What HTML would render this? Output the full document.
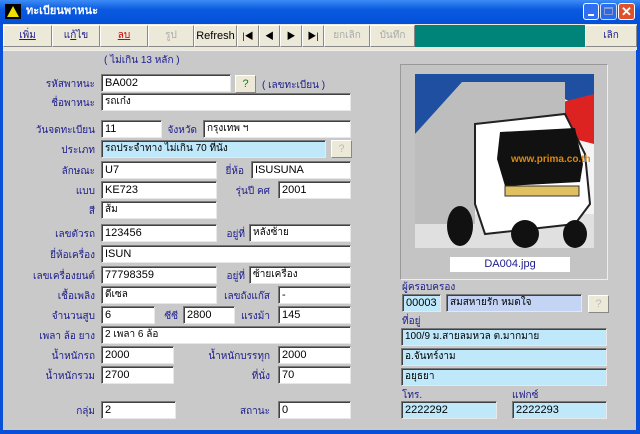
<!DOCTYPE html>
<html><head><meta charset="utf-8">
<style>
*{margin:0;padding:0;box-sizing:border-box}
body{width:640px;height:434px;overflow:hidden;background:#0a4fd8;font-family:"Liberation Sans","Noto Sans CJK SC",sans-serif;font-size:11px;position:relative}
.a{position:absolute}
#title{left:0;top:0;width:640px;height:24px;background:linear-gradient(#3d8cf5,#0a5ae0 40%,#0450d8);}
#tool{left:3px;top:24px;width:634px;height:26px;background:#ece9d8}
.btn{position:absolute;top:25px;height:22px;background:#ece9d8;border:1px solid #fff;border-right-color:#888;border-bottom-color:#888;text-align:center;line-height:20px;font-size:10px;color:#000}
#form{left:3px;top:50px;width:633px;height:380px;background:#c9c9c9;border-top:1px solid #eee}
.l{position:absolute;color:#1c1c8c;font-size:10px;line-height:12px;text-align:right;white-space:nowrap;margin-top:3px}
.i{position:absolute;height:18px;background:#fff;border:1px solid #7a7a7a;border-right-color:#e8e8e8;border-bottom-color:#e8e8e8;box-shadow:inset 1px 1px 0 #404040;padding-left:3px;line-height:16px;font-size:11px;color:#000;white-space:nowrap;overflow:hidden}
.i.t{font-size:10px}
.b{background:#bfe8fa}
.q{position:absolute;width:21px;height:18px;background:#ece9d8;border:1px solid #fff;border-right-color:#888;border-bottom-color:#888;text-align:center;line-height:16px;color:#1a7a1a;font-size:11px}
</style></head><body>
<div class="a" id="title"></div>
<div class="a" style="left:5px;top:4px;width:16px;height:15px;background:#000"></div>
<div class="a" style="left:7px;top:6px;width:0;height:0;border-left:6px solid transparent;border-right:6px solid transparent;border-bottom:11px solid #f0e000"></div>
<div class="a" style="left:26px;top:4px;color:#fff;font-weight:bold;font-size:11px;line-height:14px">ทะเบียนพาหนะ</div>
<div class="a" style="left:583px;top:3px;width:16px;height:17px;background:#2f6ff0;border:1px solid #fff;border-radius:3px"><div class="a" style="left:4px;top:10px;width:6px;height:2px;background:#fff"></div></div>
<div class="a" style="left:600px;top:3px;width:17px;height:17px;background:#2f6ff0;border:1px solid #fff;border-radius:3px;opacity:.8"><div class="a" style="left:3px;top:3px;width:9px;height:8px;border:1px solid #aac;border-top-width:2px"></div></div>
<div class="a" style="left:618px;top:3px;width:17px;height:17px;background:#e0502a;border:1px solid #fff;border-radius:3px;color:#fff;font-weight:bold;text-align:center;line-height:15px;font-size:13px">✕</div>
<div class="a" id="tool"></div>
<div class="btn" style="left:3px;width:49px;color:#1c1c8c"><u>เพิ่ม</u></div>
<div class="btn" style="left:52px;width:48px;color:#1c1c8c">แ<u>ก้</u>ไข</div>
<div class="btn" style="left:100px;width:48px;color:#c00"><u>ลบ</u></div>
<div class="btn" style="left:148px;width:46px;color:#aaa">รูป</div>
<div class="btn" style="left:194px;width:43px;font-size:11px">Refresh</div>
<div class="btn" style="left:237px;width:22px;font-size:9px">|◀</div>
<div class="btn" style="left:259px;width:21px;font-size:9px">◀</div>
<div class="btn" style="left:280px;width:22px;font-size:9px">▶</div>
<div class="btn" style="left:302px;width:22px;font-size:9px">▶|</div>
<div class="btn" style="left:324px;width:46px;color:#aaa">ยกเลิก</div>
<div class="btn" style="left:370px;width:45px;color:#aaa">บันทึก</div>
<div class="a" style="left:415px;top:25px;width:170px;height:22px;background:#00847a"></div>
<div class="btn" style="left:585px;width:52px;color:#1c1c8c">เลิก</div>
<div class="a" id="form"></div>

<div class="l" style="left:104px;top:52px">( ไม่เกิน 13 หลัก )</div>
<div class="l" style="right:545px;top:76px">รหัสพาหนะ</div><div class="i" style="left:101px;top:74px;width:130px">BA002</div>
<div class="q" style="left:235px;top:75px">?</div><div class="l" style="left:262px;top:77px">( เลขทะเบียน )</div>
<div class="l" style="right:545px;top:95px">ชื่อพาหนะ</div><div class="i t" style="left:101px;top:93px;width:250px">รถเก๋ง</div>
<div class="l" style="right:545px;top:122px">วันจดทะเบียน</div><div class="i" style="left:101px;top:120px;width:61px">11</div>
<div class="l" style="right:443px;top:122px">จังหวัด</div><div class="i t" style="left:203px;top:120px;width:148px">กรุงเทพ ฯ</div>
<div class="l" style="right:545px;top:142px">ประเภท</div><div class="i b t" style="left:101px;top:140px;width:225px">รถประจำทาง ไม่เกิน 70 ที่นั่ง</div>
<div class="q" style="left:331px;top:140px;color:#bbb">?</div>
<div class="l" style="right:545px;top:163px">ลักษณะ</div><div class="i" style="left:101px;top:161px;width:116px">U7</div>
<div class="l" style="right:396px;top:163px">ยี่ห้อ</div><div class="i" style="left:251px;top:161px;width:100px">ISUSUNA</div>
<div class="l" style="right:545px;top:183px">แบบ</div><div class="i" style="left:101px;top:181px;width:116px">KE723</div>
<div class="l" style="right:370px;top:183px">รุ่นปี คศ</div><div class="i" style="left:278px;top:181px;width:73px">2001</div>
<div class="l" style="right:545px;top:203px">สี</div><div class="i t" style="left:101px;top:201px;width:116px">ส้ม</div>
<div class="l" style="right:545px;top:226px">เลขตัวรถ</div><div class="i" style="left:101px;top:224px;width:116px">123456</div>
<div class="l" style="right:395px;top:226px">อยู่ที่</div><div class="i t" style="left:249px;top:224px;width:102px">หลังซ้าย</div>
<div class="l" style="right:545px;top:247px">ยี่ห้อเครื่อง</div><div class="i" style="left:101px;top:245px;width:250px">ISUN</div>
<div class="l" style="right:545px;top:268px">เลขเครื่องยนต์</div><div class="i" style="left:101px;top:266px;width:116px">77798359</div>
<div class="l" style="right:395px;top:268px">อยู่ที่</div><div class="i t" style="left:249px;top:266px;width:102px">ซ้ายเครื่อง</div>
<div class="l" style="right:545px;top:288px">เชื้อเพลิง</div><div class="i t" style="left:101px;top:286px;width:116px">ดีเซล</div>
<div class="l" style="right:370px;top:288px">เลขถังแก๊ส</div><div class="i" style="left:278px;top:286px;width:73px">-</div>
<div class="l" style="right:545px;top:308px">จำนวนสูบ</div><div class="i" style="left:101px;top:306px;width:54px">6</div>
<div class="l" style="right:462px;top:308px">ซีซี</div><div class="i" style="left:183px;top:306px;width:52px">2800</div>
<div class="l" style="right:370px;top:308px">แรงม้า</div><div class="i" style="left:278px;top:306px;width:73px">145</div>
<div class="l" style="right:545px;top:328px">เพลา ล้อ ยาง</div><div class="i t" style="left:101px;top:326px;width:250px">2 เพลา 6 ล้อ</div>
<div class="l" style="right:545px;top:348px">น้ำหนักรถ</div><div class="i" style="left:101px;top:346px;width:73px">2000</div>
<div class="l" style="right:370px;top:348px">น้ำหนักบรรทุก</div><div class="i" style="left:278px;top:346px;width:73px">2000</div>
<div class="l" style="right:545px;top:368px">น้ำหนักรวม</div><div class="i" style="left:101px;top:366px;width:73px">2700</div>
<div class="l" style="right:370px;top:368px">ที่นั่ง</div><div class="i" style="left:278px;top:366px;width:73px">70</div>
<div class="l" style="right:545px;top:403px">กลุ่ม</div><div class="i" style="left:101px;top:401px;width:75px">2</div>
<div class="l" style="right:370px;top:403px">สถานะ</div><div class="i" style="left:278px;top:401px;width:73px">0</div>

<div class="a" style="left:400px;top:64px;width:208px;height:216px;border:1px solid #eee;border-top-color:#999;border-left-color:#999;background:#c4c4c4"></div>
<svg class="a" style="left:415px;top:74px" width="179" height="174" viewBox="0 0 179 174">
<rect width="179" height="174" fill="#f4f4f4"/>
<polygon points="0,0 179,0 179,40 140,20 60,10 0,60" fill="#1f4fa0"/>
<polygon points="140,30 179,20 179,70 140,60" fill="#d22"/>
<polygon points="0,140 179,140 179,174 0,174" fill="#e0e0e0"/>
<polygon points="0,60 47,8 150,8 150,50 60,60 60,150 0,150" fill="#bdbdbd"/>
<polygon points="60,50 150,40 170,80 175,130 160,150 70,160 60,130" fill="#fff" stroke="#222" stroke-width="2"/>
<polygon points="85,58 160,54 168,90 165,108 90,112 82,85" fill="#111"/>
<text x="96" y="88" font-size="10" font-family="Liberation Sans" font-weight="bold" fill="#d98a10">www.prima.co.th</text>
<rect x="90" y="112" width="74" height="10" fill="#e0c060" stroke="#333"/>
<ellipse cx="45" cy="152" rx="13" ry="20" fill="#111"/>
<ellipse cx="110" cy="160" rx="14" ry="14" fill="#111"/>
<ellipse cx="160" cy="160" rx="12" ry="14" fill="#111"/>
</svg>
<div class="a" style="left:450px;top:257px;width:120px;height:15px;background:#fff;text-align:center;color:#1c1c8c;line-height:15px">DA004.jpg</div>

<div class="l" style="left:402px;top:279px">ผู้ครอบครอง</div>
<div class="i b" style="left:402px;top:294px;width:39px">00003</div>
<div class="i t" style="left:446px;top:294px;width:136px;background:#c4d4f4">สมสหายรัก หมดใจ</div>
<div class="q" style="left:588px;top:295px;color:#bbb">?</div>
<div class="l" style="left:402px;top:313px">ที่อยู่</div>
<div class="i b t" style="left:401px;top:328px;width:206px">100/9 ม.สายลมหวล ต.มากมาย</div>
<div class="i b t" style="left:401px;top:348px;width:206px">อ.จันทร์งาม</div>
<div class="i b t" style="left:401px;top:368px;width:206px">อยุธยา</div>
<div class="l" style="left:402px;top:387px">โทร.</div>
<div class="l" style="left:512px;top:387px">แฟกซ์</div>
<div class="i b" style="left:401px;top:401px;width:96px">2222292</div>
<div class="i b" style="left:512px;top:401px;width:95px">2222293</div>
</body></html>
